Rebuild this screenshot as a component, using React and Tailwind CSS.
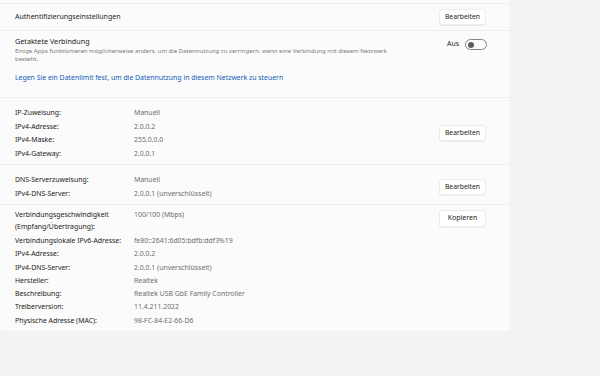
import React from 'react';

const Btn = ({ children }) => (
  <button className="w-[47px] h-[16px] bg-white rounded-[3px] border border-[#ececec] shadow-[0_1px_0_rgba(0,0,0,0.06)] text-[6.8px] text-[#1b1b1b] flex items-center justify-center">
    {children}
  </button>
);

const Row = ({ label, value, lh = "leading-[13.5px]" }) => (
  <div className={`flex ${lh}`}>
    <div className="w-[119px] text-[#1b1b1b]">{label}</div>
    <div className="text-[#6e6e6e]">{value}</div>
  </div>
);

const details = [
  ["Verbindungslokale IPv6-Adresse:", "fe80::2641:6d05:bdfb:ddf3%19"],
  ["IPv4-Adresse:", "2.0.0.2"],
  ["IPv4-DNS-Server:", "2.0.0.1 (unverschlüsselt)"],
  ["Hersteller:", "Realtek"],
  ["Beschreibung:", "Realtek USB GbE Family Controller"],
  ["Treiberversion:", "11.4.211.2022"],
  ["Physische Adresse (MAC):", "98-FC-84-E2-66-D6"],
];

export default function App() {
  return (
    <div className="w-[600px] h-[376px] bg-[#f3f3f3] overflow-hidden text-[6.9px]" style={{ fontFamily: '"Noto Sans", "Open Sans", sans-serif' }}>
      <div className="w-[510px] bg-[#fbfbfb] rounded-b-[3px]">
        <div className="h-[4px] border-b border-[#efefef]" />

        {/* Authentifizierung */}
        <div className="h-[27px] pl-[15px] pr-[24px] flex items-center justify-between border-b border-[#efefef]">
          <span className="text-[#1b1b1b] text-[7px]">Authentifizierungseinstellungen</span>
          <Btn>Bearbeiten</Btn>
        </div>

        {/* Getaktete Verbindung */}
        <div className="h-[67px] pl-[15px] pr-[23px] pt-[5px] border-b border-[#efefef]">
          <div className="flex justify-between">
            <div>
              <div className="text-[#1b1b1b] text-[7.2px] leading-[10px]">Getaktete Verbindung</div>
              <div className="text-[6px] leading-[8px] text-[#7a7a7a] w-[378px] mt-[1px]">
                Einige Apps funktionieren möglicherweise anders, um die Datennutzung zu verringern, wenn eine Verbindung mit diesem Netzwerk besteht.
              </div>
            </div>
            <div className="flex items-center gap-[6px] mt-[3px] self-start">
              <span className="text-[#1b1b1b]">Aus</span>
              <div className="w-[22px] h-[11px] rounded-full border border-[#858585] flex items-center pl-[2px]">
                <div className="w-[6px] h-[6px] rounded-full bg-[#5c5c5c]" />
              </div>
            </div>
          </div>
          <div className="mt-[10px] text-[#0f5cb8] text-[6.9px] leading-[10px]">
            Legen Sie ein Datenlimit fest, um die Datennutzung in diesem Netzwerk zu steuern
          </div>
        </div>

        {/* IP */}
        <div className="pl-[15px] pr-[24px] pt-[8px] pb-[4px] flex items-center justify-between border-b border-[#efefef]">
          <div>
            <Row label="IP-Zuweisung:" value="Manuell" />
            <Row label="IPv4-Adresse:" value="2.0.0.2" />
            <Row label="IPv4-Maske:" value="255.0.0.0" />
            <Row label="IPv4-Gateway:" value="2.0.0.1" />
          </div>
          <Btn>Bearbeiten</Btn>
        </div>

        {/* DNS */}
        <div className="pl-[15px] pr-[24px] pt-[8px] pb-[3px] flex items-center justify-between border-b border-[#efefef]">
          <div>
            <Row label="DNS-Serverzuweisung:" value="Manuell" lh="leading-[14px]" />
            <Row label="IPv4-DNS-Server:" value="2.0.0.1 (unverschlüsselt)" lh="leading-[14px]" />
          </div>
          <Btn>Bearbeiten</Btn>
        </div>

        {/* Details */}
        <div className="pl-[15px] pr-[24px] pt-[4px] pb-[4px] flex justify-between">
          <div>
            <div className="flex leading-[12px] mb-[1px]">
              <div className="w-[119px] text-[#1b1b1b]">
                Verbindungsgeschwindigkeit
                <br />
                (Empfang/Übertragung):
              </div>
              <div className="text-[#6e6e6e]">100/100 (Mbps)</div>
            </div>
            {details.map(([l, v]) => (
              <Row key={l} label={l} value={v} lh="leading-[13.3px]" />
            ))}
          </div>
          <div className="pt-[1px]">
            <button className="w-[47px] h-[17px] bg-white rounded-[3px] border border-[#ececec] shadow-[0_1px_0_rgba(0,0,0,0.06)] text-[7px] text-[#1b1b1b] flex items-center justify-center">
              Kopieren
            </button>
          </div>
        </div>
      </div>
    </div>
  );
}
